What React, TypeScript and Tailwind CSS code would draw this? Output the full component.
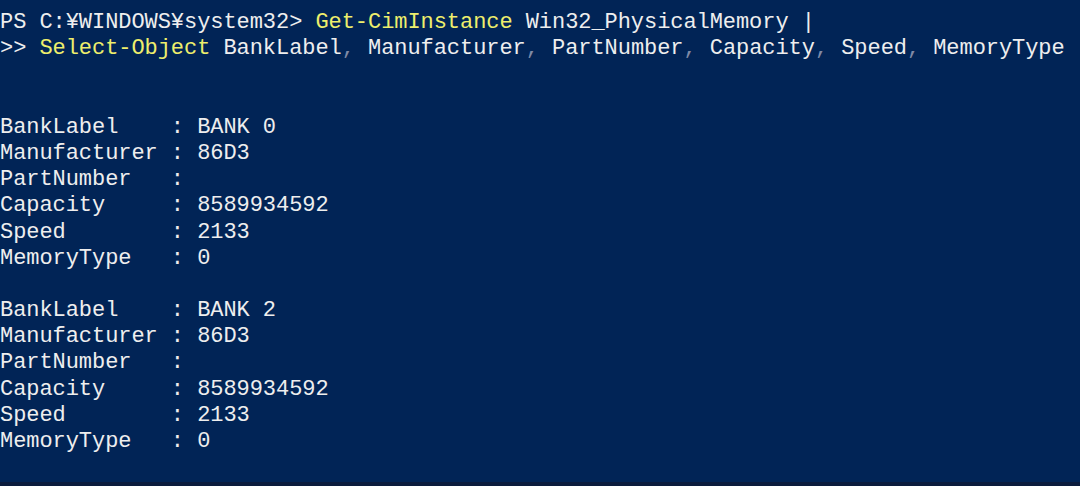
const prompt = "PS C:¥WINDOWS¥system32> ";

const banks = [
    { label: "BANK 0", manufacturer: "86D3", part: "", capacity: "8589934592", speed: "2133", type: "0" },
    { label: "BANK 2", manufacturer: "86D3", part: "", capacity: "8589934592", speed: "2133", type: "0" },
];

function Line({ children }: { children?: React.ReactNode }) {
    return <div className="h-[26.2px] whitespace-pre">{children ?? " "}</div>;
}

export default function App() {
    return (
        <div className="w-[1080px] h-[486px] bg-[#012456] flex flex-col overflow-hidden">
            <div
                className="flex-1 pt-[10px] text-[22px] leading-[26.2px] tracking-[-0.06px] text-[#eeeeee]"
                style={{ fontFamily: '"Liberation Mono", "DejaVu Sans Mono", monospace' }}
            >
                <Line>
                    {prompt}
                    <span className="text-[#eeee6c]">Get-CimInstance</span> Win32_PhysicalMemory |
                </Line>
                <Line>
                    {">> "}
                    <span className="text-[#eeee6c]">Select-Object</span> BankLabel
                    <span className="text-[#7f8aa6]">,</span> Manufacturer
                    <span className="text-[#7f8aa6]">,</span> PartNumber
                    <span className="text-[#7f8aa6]">,</span> Capacity
                    <span className="text-[#7f8aa6]">,</span> Speed
                    <span className="text-[#7f8aa6]">,</span> MemoryType
                </Line>
                <Line />
                <Line />
                {banks.map((b, i) => (
                    <div key={i}>
                        <Line>{"BankLabel    : " + b.label}</Line>
                        <Line>{"Manufacturer : " + b.manufacturer}</Line>
                        <Line>{"PartNumber   : " + b.part}</Line>
                        <Line>{"Capacity     : " + b.capacity}</Line>
                        <Line>{"Speed        : " + b.speed}</Line>
                        <Line>{"MemoryType   : " + b.type}</Line>
                        <Line />
                    </div>
                ))}
            </div>
            <div className="h-[4px] bg-[#0b1c3d]" />
        </div>
    );
}
